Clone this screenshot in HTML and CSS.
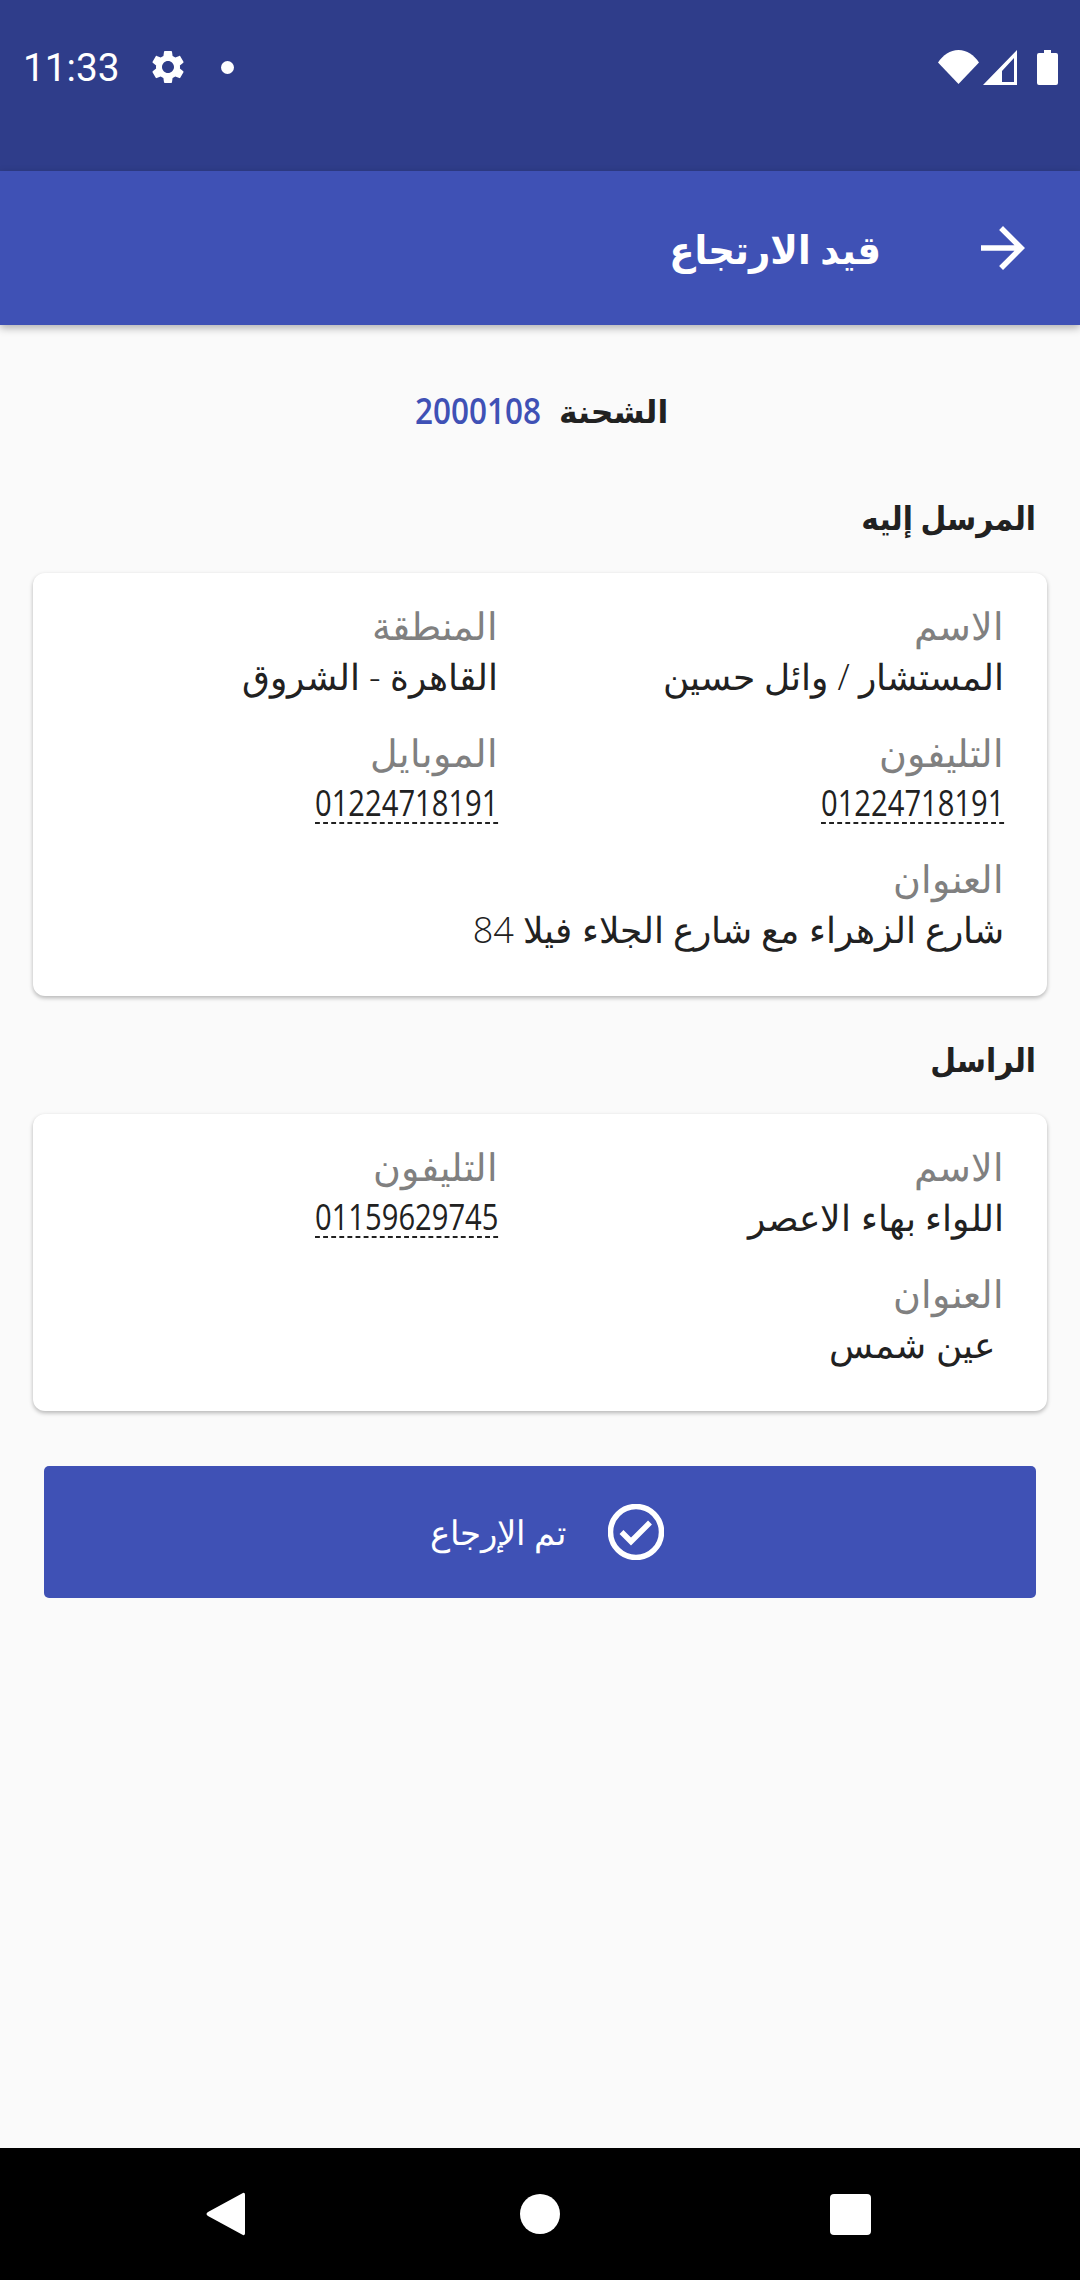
FILE: index.html
```html
<!DOCTYPE html>
<html lang="ar">
  <head>
    <meta charset="UTF-8" />
    <title>قيد الارتجاع</title>
    <link rel="stylesheet" href="styles.css">
  </head>
  <body>
    <div class="screen">
      <div class="status-bar">
        <span class="clock">11:33</span>
        <svg class="gear" viewBox="0 0 24 24"><path d="M19.14 12.94c.04-.3.06-.61.06-.94 0-.32-.02-.64-.07-.94l2.03-1.58c.18-.14.23-.41.12-.61l-1.92-3.32c-.12-.22-.37-.29-.59-.22l-2.39.96c-.5-.38-1.03-.7-1.62-.94l-.36-2.54c-.04-.24-.24-.41-.48-.41h-3.84c-.24 0-.43.17-.47.41l-.36 2.54c-.59.24-1.13.57-1.62.94l-2.39-.96c-.22-.08-.47 0-.59.22L2.74 8.87c-.12.21-.08.47.12.61l2.03 1.58c-.05.3-.09.63-.09.94s.02.64.07.94l-2.03 1.58c-.18.14-.23.41-.12.61l1.92 3.32c.12.22.37.29.59.22l2.39-.96c.5.38 1.03.7 1.62.94l.36 2.54c.05.24.24.41.48.41h3.84c.24 0 .44-.17.47-.41l.36-2.54c.59-.24 1.13-.56 1.62-.94l2.39.96c.22.08.47 0 .59-.22l1.92-3.32c.12-.22.07-.47-.12-.61l-2.01-1.58zM12 15.6c-1.98 0-3.6-1.62-3.6-3.6s1.62-3.6 3.6-3.6 3.6 1.62 3.6 3.6-1.62 3.6-3.6 3.6z"/></svg>
        <span class="dot"></span>
        <span class="status-spacer"></span>
        <svg class="wifi" viewBox="0 0 41 34"><path d="M0 12.5C5 5 12 0 20.500 0S36 5 41 12.500L20.500 34z"/></svg>
        <svg class="signal" viewBox="0 0 34 35"><path fill-rule="evenodd" d="M34 0v35H0zM31 8 19 21v11h12z"/></svg>
        <svg class="battery" viewBox="0 0 21 35"><path d="M7 0h7v3h5q2 0 2 2v28q0 2-2 2H2q-2 0-2-2V5q0-2 2-2h5z"/></svg>
      </div>

      <header class="app-bar">
        <svg class="back" viewBox="0 0 24 24"><path d="M12 4l-1.41 1.41L16.17 11H4v2h12.17l-5.58 5.59L12 20l8-8z"/></svg>
        <h1 class="title">قيد الارتجاع</h1>
      </header>

      <main class="content">
        <div class="shipment">
          <span class="shipment-label">الشحنة</span>
          <span class="shipment-no">2000108</span>
        </div>

        <h2 class="section-title">المرسل إليه</h2>
        <section class="card">
          <div class="field">
            <div class="label">الاسم</div>
            <div class="value">المستشار / وائل حسين</div>
          </div>
          <div class="field">
            <div class="label">المنطقة</div>
            <div class="value">القاهرة - الشروق</div>
          </div>
          <div class="field">
            <div class="label">التليفون</div>
            <div class="value phone">01224718191</div>
          </div>
          <div class="field">
            <div class="label">الموبايل</div>
            <div class="value phone">01224718191</div>
          </div>
          <div class="field wide">
            <div class="label">العنوان</div>
            <div class="value">شارع الزهراء مع شارع الجلاء فيلا 84</div>
          </div>
        </section>

        <h2 class="section-title second">الراسل</h2>
        <section class="card">
          <div class="field">
            <div class="label">الاسم</div>
            <div class="value">اللواء بهاء الاعصر</div>
          </div>
          <div class="field">
            <div class="label">التليفون</div>
            <div class="value phone">01159629745</div>
          </div>
          <div class="field wide">
            <div class="label">العنوان</div>
            <div class="value">&nbsp;عين شمس</div>
          </div>
        </section>

        <button class="done">
          <svg class="done-icon" viewBox="0 0 56 56"><circle cx="28" cy="28" r="25.500" /><path d="M13.500 28l9.500 9.500 19-19" /></svg>
          <span>تم الإرجاع</span>
        </button>
      </main>

      <nav class="nav-bar">
        <svg class="nav-back" viewBox="0 0 40 44"><path d="M36 1.500c2-1.500 3-.5 3 1.500v38c0 2-1 3-3 1.500L2 24c-2-1-2-3 0-4z"/></svg>
        <span class="nav-home"></span>
        <span class="nav-recent"></span>
      </nav>
    </div>
  </body>
</html>
```

FILE: styles.css
```css
html,
body {
  margin: 0;
  height: 100%;
}

body {
  background: #fafafa;
  font-family: "Open Sans", "DejaVu Sans", sans-serif;
}

.screen {
  display: flex;
  flex-direction: column;
  height: 2280px;
  overflow: hidden;
}

/* status bar */
.status-bar {
  display: flex;
  align-items: center;
  padding: 0 22px 37px 23px;
  box-sizing: border-box;
  height: 171px;
  background: #2f3d8a;
  color: white;
  fill: white;
}

.clock {
  font-family: Roboto, sans-serif;
  font-size: 38.800px;
  width: 125px;
}

.gear {
  width: 40px;
  height: 40px;
}

.dot {
  width: 13px;
  height: 13px;
  margin-left: 33px;
  border-radius: 50%;
  background: white;
}

.status-spacer {
  flex: 1;
}

.wifi {
  width: 41px;
  height: 34px;
}

.signal {
  width: 34px;
  height: 35px;
  margin-left: 4px;
}

.battery {
  width: 21px;
  height: 35px;
  margin-left: 20px;
}

/* app bar */
.app-bar {
  display: flex;
  direction: rtl;
  align-items: center;
  height: 154px;
  padding-right: 44px;
  background: #3f51b5;
  box-shadow: 0 3px 8px rgba(0, 0, 0, 0.3);
  fill: white;
  position: relative;
}

.back {
  width: 66px;
  height: 66px;
}

.title {
  margin: 0 89px 0 0;
  color: white;
  font-size: 39px;
  font-weight: 600;
  transform: scaleX(0.95);
  transform-origin: right;
}

/* content */
.content {
  flex: 1;
  direction: rtl;
  padding: 0 33px;
}

.shipment {
  display: flex;
  justify-content: center;
  align-items: center;
  gap: 18px;
  margin-top: 60px;
  padding-left: 3px;
  height: 50px;
}

.shipment-label {
  font-size: 31.500px;
  font-weight: 600;
  color: #212121;
}

.shipment-no {
  font-size: 36px;
  font-weight: 600;
  color: #3f51b5;
  margin-left: -18px;
  transform: scaleX(0.875);
  transform-origin: right;
}

.section-title {
  margin: 58px 11px 30px 0;
  font-size: 33px;
  font-weight: 600;
  line-height: 50px;
  color: #212121;
  transform: scaleX(0.9);
  transform-origin: right;
}

.section-title.second {
  margin-top: 39px;
  margin-bottom: 29px;
}

.card {
  display: grid;
  grid-template-columns: 506px 1fr;
  row-gap: 22.500px;
  padding: 26px 43px 40px 0;
  background: white;
  border-radius: 12px;
  box-shadow: 0 2px 4px rgba(0, 0, 0, 0.28);
}

.wide {
  grid-column: 1 / 3;
}

.label {
  font-size: 38px;
  font-weight: 300;
  line-height: 52px;
  color: #808080;
}

.value {
  font-size: 36px;
  font-weight: 300;
  line-height: 52px;
  color: #212121;
}

.phone {
  display: inline-block;
  font-size: 36px;
  font-weight: 400;
  line-height: 38px;
  margin-top: 6px;
  margin-bottom: 6px;
  border-bottom: 2px dashed #212121;
  transform: scaleX(0.81);
  transform-origin: right;
}

.done {
  display: flex;
  justify-content: center;
  align-items: center;
  gap: 42px;
  width: 992px;
  height: 132px;
  margin: 55px 11px 0;
  padding: 0 0 0 14px;
  border: none;
  border-radius: 5px;
  background: #3f51b5;
  color: white;
  font-family: inherit;
  font-size: 34px;
  font-weight: 300;
}

.done-icon {
  width: 56px;
  height: 56px;
  fill: none;
  stroke: white;
  stroke-width: 5.500;
}

/* navigation */
.nav-bar {
  display: flex;
  align-items: center;
  height: 132px;
  background: black;
  fill: white;
}

.nav-back {
  width: 40px;
  height: 44px;
  margin-left: 206px;
}

.nav-home {
  width: 40px;
  height: 40px;
  margin-left: 274px;
  border-radius: 50%;
  background: white;
}

.nav-recent {
  width: 41px;
  height: 41px;
  margin-left: 270px;
  border-radius: 4px;
  background: white;
}
```
